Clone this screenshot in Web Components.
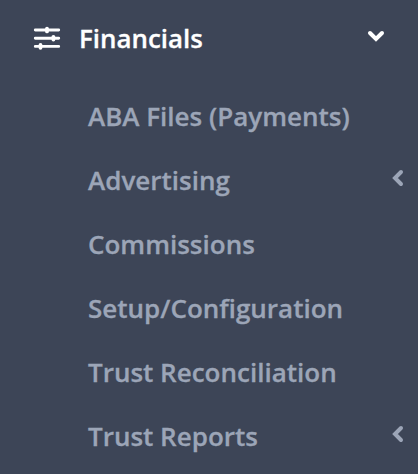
<!DOCTYPE html>
<html lang="en">
<head>
<meta charset="utf-8">
<title>Financials</title>
<style>
    body {
        margin: 0;
        background: #3d4557;
        font-family: "Open Sans", sans-serif;
    }
</style>
</head>
<body>
<nav-group titulo="Financials">
    <nav-item>ABA Files (Payments)</nav-item>
    <nav-item submenu>Advertising</nav-item>
    <nav-item>Commissions</nav-item>
    <nav-item>Setup/Configuration</nav-item>
    <nav-item>Trust Reconciliation</nav-item>
    <nav-item submenu>Trust Reports</nav-item>
</nav-group>

<script>
class NavGroup extends HTMLElement {
    constructor() {
        super()
        this.attachShadow({ mode: "open" })
    }

    getTemplate() {
        const template = document.createElement("template")
        template.innerHTML = `
            ${this.getStyles()}
            <header>
                <svg class="sliders" width="28" height="26" viewBox="0 0 28 26">
                    <path d="M2.3 5h23.4M2.3 13.2h23.4M2.3 21.4h23.4" stroke-width="2.9"/>
                    <path d="M14 3.6v2.8M20.4 11.8v2.8M7.5 20v2.8" stroke-width="3.8"/>
                </svg>
                <span>${this.getAttribute("titulo")}</span>
                <svg class="down" width="18" height="12" viewBox="0 0 18 12">
                    <path d="M3 3l6 6 6-6" stroke-width="4"/>
                </svg>
            </header>
            <slot></slot>
        `
        return template
    }

    getStyles() {
        return `
        <style>
            :host {
                display: block;
                height: 474px;
                overflow: hidden;
            }
            header {
                display: flex;
                align-items: center;
                height: 76px;
                margin-bottom: 8px;
                padding: 0 33px;
                color: #fff;
                font-size: 25.9px;
                font-weight: 600;
                -webkit-text-stroke: 0.3px;
            }
            span { flex: 1; margin-left: 18px; }
            svg { fill: none; stroke: currentColor; stroke-linecap: round; }
            .down { margin-bottom: 4px; }
        </style>
        `
    }

    connectedCallback() {
        this.shadowRoot.appendChild(this.getTemplate().content.cloneNode(true))
    }
}

class NavItem extends HTMLElement {
    constructor() {
        super()
        this.attachShadow({ mode: "open" })
    }

    getTemplate() {
        const template = document.createElement("template")
        template.innerHTML = `
            ${this.getStyles()}
            <slot></slot>
            ${this.hasAttribute("submenu") ? `
            <svg width="12" height="18" viewBox="0 0 12 18">
                <path d="M9 3L3 9l6 6"/>
            </svg>` : ""}
        `
        return template
    }

    getStyles() {
        return `
        <style>
            :host {
                display: flex;
                align-items: center;
                justify-content: space-between;
                box-sizing: border-box;
                height: 64px;
                padding: 0 14px 0 88px;
                color: #9ca5b7;
                font-size: 26px;
                font-weight: 600;
                white-space: nowrap;
                -webkit-text-stroke: 0.3px;
            }
            svg {
                margin-bottom: 4px;
                fill: none;
                stroke: currentColor;
                stroke-width: 4;
                stroke-linecap: round;
            }
        </style>
        `
    }

    connectedCallback() {
        this.shadowRoot.appendChild(this.getTemplate().content.cloneNode(true))
    }
}

customElements.define("nav-group", NavGroup)
customElements.define("nav-item", NavItem)
</script>
</body>
</html>
